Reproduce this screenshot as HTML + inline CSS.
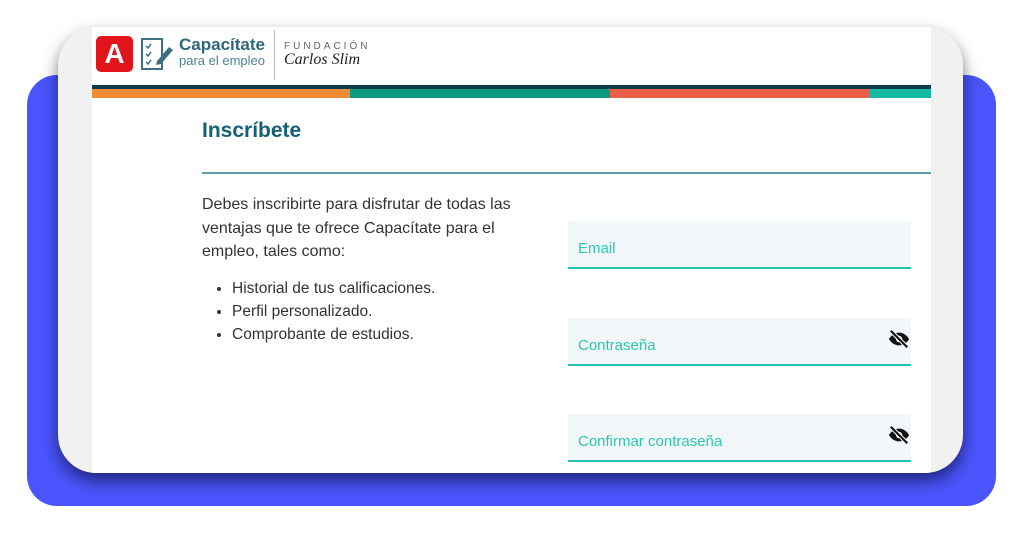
<!DOCTYPE html>
<html><head><meta charset="utf-8"><style>
*{margin:0;padding:0;box-sizing:border-box}
body{width:1024px;height:536px;background:#fff;position:relative;overflow:hidden;font-family:"Liberation Sans",sans-serif}
.blue{position:absolute;left:27px;top:75px;width:969px;height:431px;background:#4a55fd;border-radius:30px}
.card{position:absolute;left:58px;top:27px;width:905px;height:446px;background:#f1f1f1;border-radius:38px;box-shadow:0 8px 16px rgba(0,0,20,.55);overflow:hidden}
.white{position:absolute;left:34px;top:0;width:839px;height:446px;background:#fff;overflow:hidden}
.abs{position:absolute}
.t{position:absolute;white-space:nowrap}
.field{position:absolute;left:476px;width:343px;height:48px;background:#f2f7f9;border-bottom:2px solid #1ec6ad}
.field span{position:absolute;left:10px;bottom:10px;color:#2cc7b0;font-size:15px}
.eye{position:absolute;right:0;top:10px}
</style></head><body>
<div class="blue"></div>
<div class="card"><div class="white">
 <div class="abs" style="left:4px;top:9px;width:37px;height:36px;background:#e3131b;border-radius:5px;color:#fff;font-weight:bold;font-size:28px;text-align:center;line-height:36px">A</div>
 <svg class="abs" style="left:48px;top:8px" width="38" height="38" viewBox="0 0 38 38"><rect x="2" y="4" width="20" height="30" fill="none" stroke="#3e6e86" stroke-width="2"/><path d="M6 11l2 2 3-4M6 19l2 2 3-4M6 27l2 2 3-4" stroke="#3e6e86" stroke-width="1.5" fill="none"/><path d="M17 26l12-14 4 3-12 14-5 1z" fill="#3e6e86"/></svg>
 <div class="t" style="left:87px;top:8px;font-size:17px;font-weight:bold;color:#31657c">Capacítate</div>
 <div class="t" style="left:87px;top:26px;font-size:13px;color:#4d8196">para el empleo</div>
 <div class="abs" style="left:182px;top:3px;width:1px;height:50px;background:#bbb"></div>
 <div class="t" style="left:192px;top:14px;font-size:10px;letter-spacing:3px;color:#666">FUNDACIÓN</div>
 <div class="t" style="left:192px;top:24px;font-size:16px;font-style:italic;font-family:'Liberation Serif',serif;color:#222">Carlos Slim</div>
 <div class="abs" style="left:0;top:58px;width:839px;height:4px;background:#0f3a47"></div>
 <div class="abs" style="left:0;top:62px;width:258px;height:9px;background:#ef8d36"></div>
 <div class="abs" style="left:258px;top:62px;width:260px;height:9px;background:#0f9b82"></div>
 <div class="abs" style="left:518px;top:62px;width:260px;height:9px;background:#eb5e4a"></div>
 <div class="abs" style="left:778px;top:62px;width:61px;height:9px;background:#13b9a2"></div>
 <div class="t" style="left:110px;top:92px;font-size:21px;font-weight:bold;color:#135f77">Inscríbete</div>
 <div class="abs" style="left:110px;top:145px;width:729px;height:2px;background:#5f9eab"></div>
 <div class="abs" style="left:110px;top:166px;width:340px;font-size:16px;line-height:23.5px;color:#333">Debes inscribirte para disfrutar de todas las ventajas que te ofrece Capacítate para el empleo, tales como:</div>
 <ul class="abs" style="left:140px;top:250px;font-size:15.5px;line-height:23px;color:#333">
  <li>Historial de tus calificaciones.</li><li>Perfil personalizado.</li><li>Comprobante de estudios.</li>
 </ul>
 <div class="field" style="top:194px"><span>Email</span></div>
 <div class="field" style="top:291px"><span>Contraseña</span>
  <svg class="eye" width="24" height="22" viewBox="0 0 24 24"><path d="M12 5C7 5 3 8.5 1 12 3 15.5 7 19 12 19s9-3.5 11-7C21 8.5 17 5 12 5z" fill="#111"/><circle cx="12" cy="12" r="3.5" fill="#f2f7f9"/><path d="M3 3l18 18" stroke="#f2f7f9" stroke-width="4.5"/><path d="M3 3l18 18" stroke="#111" stroke-width="2.2"/></svg></div>
 <div class="field" style="top:387px"><span>Confirmar contraseña</span>
  <svg class="eye" width="24" height="22" viewBox="0 0 24 24"><path d="M12 5C7 5 3 8.5 1 12 3 15.5 7 19 12 19s9-3.5 11-7C21 8.5 17 5 12 5z" fill="#111"/><circle cx="12" cy="12" r="3.5" fill="#f2f7f9"/><path d="M3 3l18 18" stroke="#f2f7f9" stroke-width="4.5"/><path d="M3 3l18 18" stroke="#111" stroke-width="2.2"/></svg></div>
</div></div>
</body></html>
